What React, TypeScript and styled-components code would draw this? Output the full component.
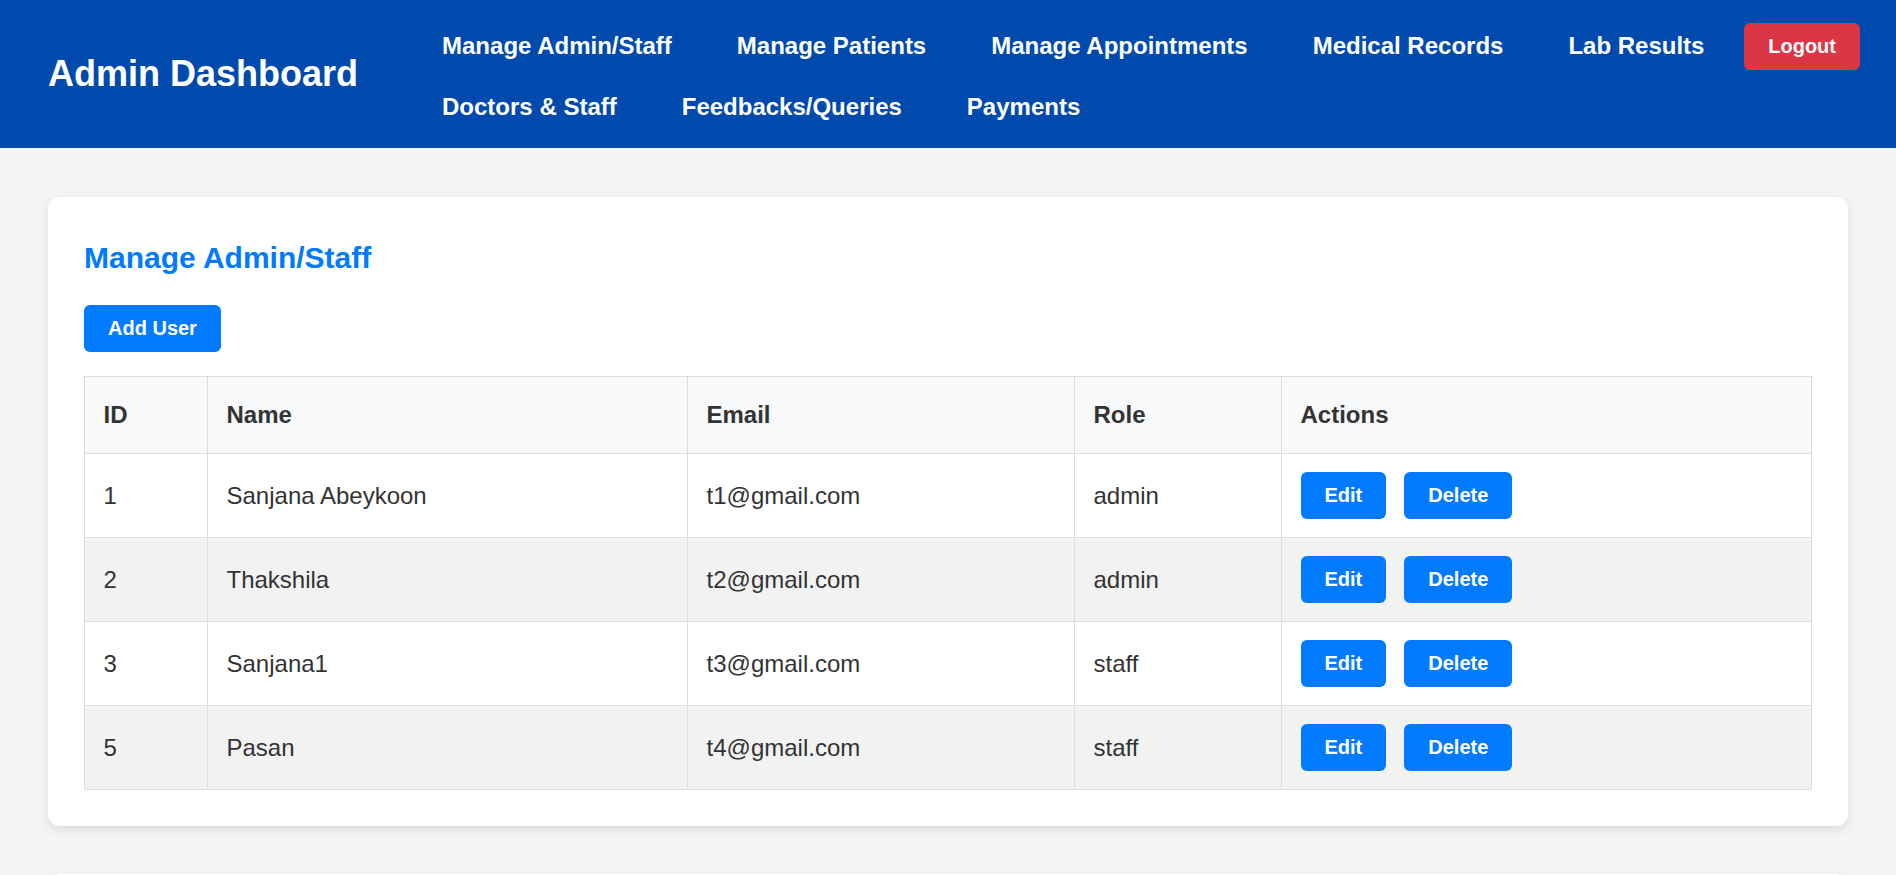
import React from "react";
import styled, { createGlobalStyle } from "styled-components";

const GlobalStyle = createGlobalStyle`
  * { box-sizing: border-box; }
  html, body { margin: 0; padding: 0; }
  body {
    background: #f4f4f4;
    font-family: "Liberation Sans", Arial, Helvetica, sans-serif;
    color: #333;
    line-height: 1.6;
  }
`;

const Header = styled.header`
  display: flex;
  align-items: center;
  background: #004aad;
  color: #fff;
  padding: 16px 36px 11px 48px;
  min-height: 148px;
`;

const Brand = styled.h1`
  margin: 0 60px 6px 0;
  font-size: 36px;
  font-weight: bold;
  white-space: nowrap;
`;

const NavList = styled.ul`
  flex: 1;
  display: flex;
  flex-wrap: wrap;
  column-gap: 17px;
  row-gap: 0;
  list-style: none;
  margin: 0;
  padding: 0;
`;

const NavItem = styled.li`
  display: block;
`;

const NavLink = styled.a`
  display: block;
  padding: 11px 24px;
  color: #fff;
  font-size: 24px;
  font-weight: bold;
  text-decoration: none;
  white-space: nowrap;
`;

const Button = styled.button<{ $variant?: "primary" | "danger" }>`
  font-family: "Liberation Sans", Arial, Helvetica, sans-serif;
  font-size: 20px;
  font-weight: bold;
  line-height: normal;
  color: #fff;
  background: ${(p) => (p.$variant === "danger" ? "#dc3545" : "#007bff")};
  border: none;
  border-radius: 6px;
  padding: 12px 24px;
  cursor: pointer;
  white-space: nowrap;
`;

const LogoutButton = styled(Button)`
  align-self: flex-start;
  margin-top: 7px;
`;

const Main = styled.main`
  display: flex;
  flex-direction: column;
  gap: 48px;
  padding: 49px 48px 48px;
`;

const Card = styled.section`
  background: #fff;
  border-radius: 12px;
  padding: 36px;
  box-shadow: 0 4px 10px rgba(0, 0, 0, 0.1);
`;

const SectionTitle = styled.h2`
  margin: 1px 0 23px;
  color: #007bff;
  font-size: 30px;
  font-weight: bold;
`;

const Toolbar = styled.div`
  display: flex;
  margin-bottom: 24px;
`;

const Table = styled.table`
  width: 100%;
  border-collapse: collapse;
  table-layout: fixed;
  border: 1px solid #ddd;
  font-size: 24px;
`;

const HeadCell = styled.th<{ $width?: number }>`
  width: ${(p) => (p.$width ? `${p.$width}px` : "auto")};
  text-align: left;
  font-weight: bold;
  background: #f8f9fa;
  color: #333;
  padding: 19px 18.5px;
  border: 1px solid #ddd;
  vertical-align: middle;
`;

const Row = styled.tr<{ $striped?: boolean }>`
  background: ${(p) => (p.$striped ? "#f2f2f2" : "#fff")};
`;

const Cell = styled.td`
  padding: 18px 18.5px;
  border: 1px solid #ddd;
  color: #333;
  vertical-align: middle;
`;

const ActionGroup = styled.div`
  display: flex;
  gap: 18px;
`;

const navLinks = [
  "Manage Admin/Staff",
  "Manage Patients",
  "Manage Appointments",
  "Medical Records",
  "Lab Results",
  "Doctors & Staff",
  "Feedbacks/Queries",
  "Payments",
];

const users = [
  { id: 1, name: "Sanjana Abeykoon", email: "t1@gmail.com", role: "admin" },
  { id: 2, name: "Thakshila", email: "t2@gmail.com", role: "admin" },
  { id: 3, name: "Sanjana1", email: "t3@gmail.com", role: "staff" },
  { id: 5, name: "Pasan", email: "t4@gmail.com", role: "staff" },
];

export default function App() {
  return (
    <>
      <GlobalStyle />
      <Header>
        <Brand>Admin Dashboard</Brand>
        <NavList>
          {navLinks.map((l) => (
            <NavItem key={l}>
              <NavLink href="#">{l}</NavLink>
            </NavItem>
          ))}
        </NavList>
        <LogoutButton $variant="danger">Logout</LogoutButton>
      </Header>
      <Main>
        <Card>
          <SectionTitle>Manage Admin/Staff</SectionTitle>
          <Toolbar>
            <Button>Add User</Button>
          </Toolbar>
          <Table>
            <thead>
              <Row>
                <HeadCell $width={123}>ID</HeadCell>
                <HeadCell $width={480}>Name</HeadCell>
                <HeadCell $width={387}>Email</HeadCell>
                <HeadCell $width={207}>Role</HeadCell>
                <HeadCell>Actions</HeadCell>
              </Row>
            </thead>
            <tbody>
              {users.map((u, i) => (
                <Row key={u.id} $striped={i % 2 === 1}>
                  <Cell>{u.id}</Cell>
                  <Cell>{u.name}</Cell>
                  <Cell>{u.email}</Cell>
                  <Cell>{u.role}</Cell>
                  <Cell>
                    <ActionGroup>
                      <Button>Edit</Button>
                      <Button>Delete</Button>
                    </ActionGroup>
                  </Cell>
                </Row>
              ))}
            </tbody>
          </Table>
        </Card>
        <Card>
          <SectionTitle>Manage Patients</SectionTitle>
          <Toolbar>
            <Button>Add Patient</Button>
          </Toolbar>
        </Card>
      </Main>
    </>
  );
}
